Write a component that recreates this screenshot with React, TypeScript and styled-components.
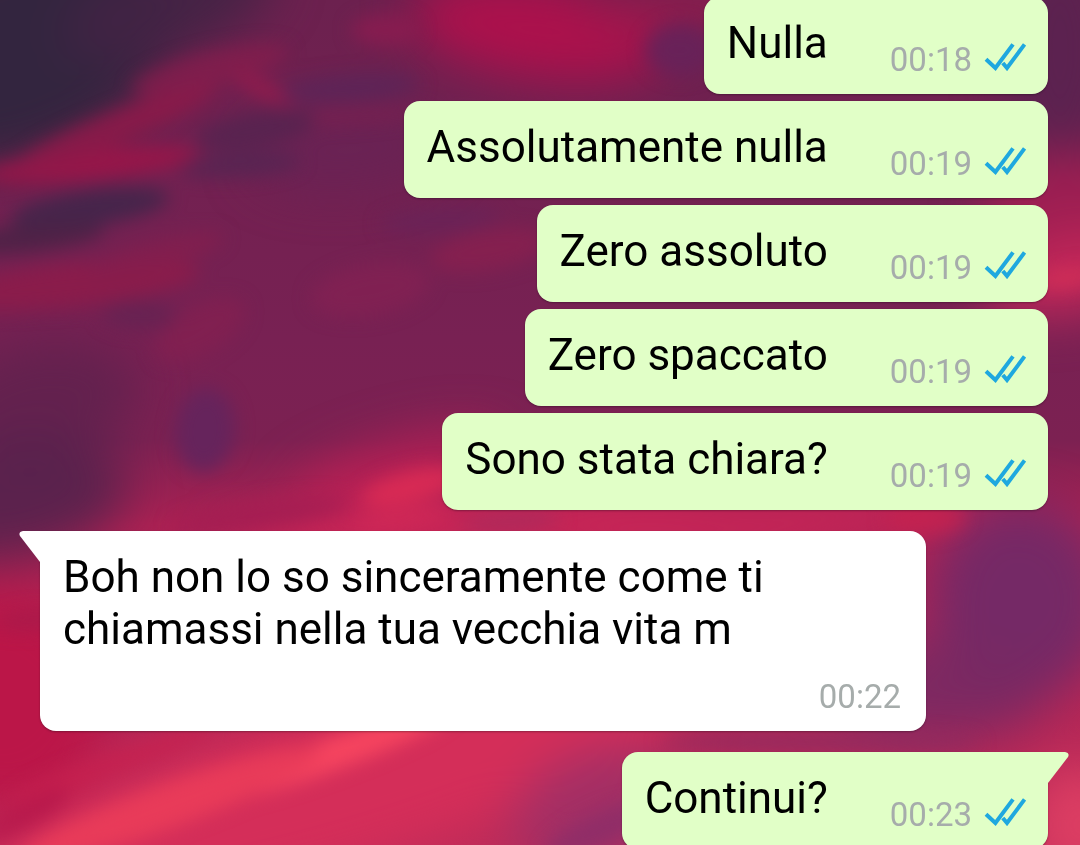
import React from "react";
import styled, { createGlobalStyle } from "styled-components";

const GlobalStyle = createGlobalStyle`
  *, *::before, *::after { box-sizing: border-box; }
  body {
    margin: 0;
    background: #6e2152;
    font-family: Roboto, "Noto Sans", sans-serif;
  }
`;

const Screen = styled.main`
  display: grid;
  grid-template: minmax(0, 1fr) / minmax(0, 1fr);
  height: 100vh;
  overflow: hidden;
`;

const WallpaperArt = styled.svg`
  grid-area: 1 / 1;
  display: block;
  width: 100%;
  height: 100%;
`;

const Conversation = styled.ol`
  grid-area: 1 / 1;
  z-index: 1;
  display: flex;
  flex-direction: column;
  margin: -3px 0 0;
  padding: 0 32px 0 40px;
  list-style: none;
`;

const MessageRow = styled.li<{ $mine: boolean; $first: boolean }>`
  display: flex;
  flex-shrink: 0;
  justify-content: ${(p) => (p.$mine ? "flex-end" : "flex-start")};
  margin-top: ${(p) => (p.$first ? 21 : 7)}px;

  &:first-child {
    margin-top: 0;
  }
`;

const Bubble = styled.article<{ $mine: boolean; $first: boolean }>`
  position: relative;
  display: flex;
  flex-direction: ${(p) => (p.$mine ? "row" : "column")};
  align-items: ${(p) => (p.$mine ? "flex-end" : "stretch")};
  gap: ${(p) => (p.$mine ? "0 62px" : "22px")};
  max-width: 886px;
  padding: ${(p) => (p.$mine ? "20px 22px 15px 23px" : "20px 25px 15px 23px")};
  border-radius: 16px;
  border-top-left-radius: ${(p) => (!p.$mine && p.$first ? 0 : 16)}px;
  border-top-right-radius: ${(p) => (p.$mine && p.$first ? 0 : 16)}px;
  background: ${(p) => (p.$mine ? "#e1ffc7" : "#ffffff")};
  box-shadow: 0 1px 2px rgba(20, 10, 20, 0.35);
`;

const Tail = styled.svg<{ $mine: boolean }>`
  position: absolute;
  top: 0;
  left: ${(p) => (p.$mine ? "100%" : "auto")};
  right: ${(p) => (p.$mine ? "auto" : "100%")};
  width: 21px;
  height: 32px;
  fill: ${(p) => (p.$mine ? "#e1ffc7" : "#ffffff")};
`;

const Body = styled.p<{ $mine: boolean }>`
  margin: 0;
  padding-bottom: ${(p) => (p.$mine ? 10 : 0)}px;
  color: #000;
  font-size: 44px;
  line-height: 52px;
`;

const Meta = styled.footer`
  display: flex;
  align-items: flex-end;
  justify-content: flex-end;
  gap: 12px;
`;

const Stamp = styled.time`
  color: #a6acab;
  font-size: 33px;
  line-height: 39px;
`;

const ReadTicks = styled.svg`
  width: 42px;
  height: 29px;
  margin-bottom: 8px;
  fill: none;
  stroke: #1fa8df;
  stroke-width: 4;
`;

type Message = { text: string; time: string; mine: boolean; first: boolean };

const messages: Message[] = [
  { text: "Nulla", time: "00:18", mine: true, first: false },
  { text: "Assolutamente nulla", time: "00:19", mine: true, first: false },
  { text: "Zero assoluto", time: "00:19", mine: true, first: false },
  { text: "Zero spaccato", time: "00:19", mine: true, first: false },
  { text: "Sono stata chiara?", time: "00:19", mine: true, first: false },
  {
    text: "Boh non lo so sinceramente come ti chiamassi nella tua vecchia vita m",
    time: "00:22",
    mine: false,
    first: true,
  },
  { text: "Continui?", time: "00:23", mine: true, first: true },
];

type Cloud = [cx: number, cy: number, rx: number, ry: number, tilt: number, fill: string, opacity: number];

const hazeClouds: Cloud[] = [
  [20, 50, 170, 105, -22, "#33253f", 1],
  [170, 5, 110, 50, -20, "#432445", 0.9],
  [1060, 50, 60, 110, 0, "#5a2250", 0.9],
  [540, 30, 130, 50, 8, "#ac114c", 1],
  [700, 10, 120, 25, 0, "#961c4e", 0.8],
  [350, 150, 100, 40, -5, "#682355", 0.8],
  [40, 400, 100, 60, -10, "#5e224e", 0.8],
  [10, 500, 120, 60, -10, "#54224c", 0.9],
  [1070, 210, 90, 60, 0, "#a81e52", 0.8],
  [1070, 275, 90, 40, -10, "#c8285a", 0.9],
  [400, 470, 110, 30, -15, "#b81f54", 0.9],
  [520, 525, 300, 28, -3, "#cc2657", 1],
  [780, 525, 200, 35, -8, "#c42658", 0.9],
  [1020, 600, 90, 100, 0, "#752966", 1],
  [0, 700, 110, 110, 0, "#bb1648", 1],
  [330, 790, 380, 80, -16, "#d42e59", 1],
  [600, 810, 90, 60, -20, "#a03066", 0.9],
  [940, 690, 110, 50, 0, "#782963", 0.9],
  [1080, 825, 50, 60, 0, "#dc3e63", 1],
];

const streakClouds: Cloud[] = [
  [90, 165, 110, 15, -6, "#961649", 1],
  [115, 128, 110, 16, -22, "#8c1a49", 0.9],
  [210, 70, 80, 18, -14, "#841d4c", 0.8],
  [265, 90, 34, 9, 25, "#981a4c", 0.8],
  [385, 30, 34, 16, 0, "#8c1c50", 0.8],
  [90, 208, 80, 18, -8, "#46254b", 1],
  [30, 238, 75, 14, -6, "#4a2246", 0.9],
  [70, 285, 130, 22, -6, "#8a1c4b", 1],
  [155, 255, 70, 14, -15, "#851e4e", 0.8],
  [350, 88, 70, 14, -4, "#5c2558", 0.9],
  [350, 116, 70, 7, -3, "#7c2050", 0.7],
  [255, 130, 60, 18, -10, "#572350", 0.9],
  [240, 165, 60, 12, -4, "#522552", 0.8],
  [680, 50, 34, 26, 0, "#66225a", 0.9],
  [205, 430, 30, 42, 5, "#66245c", 1],
  [140, 315, 38, 14, 0, "#642352", 0.8],
  [200, 330, 50, 24, -30, "#842050", 0.7],
  [370, 290, 60, 26, -10, "#842152", 0.7],
  [490, 250, 60, 20, -10, "#8c1f4e", 0.7],
  [440, 220, 60, 12, -4, "#66245a", 0.7],
  [410, 487, 50, 16, -15, "#dc2b54", 0.9],
  [400, 520, 50, 10, -8, "#d42a57", 0.7],
  [510, 522, 50, 9, -4, "#a82c5c", 0.8],
  [260, 515, 90, 14, -8, "#a31d53", 0.8],
  [925, 518, 40, 16, 0, "#c5224f", 0.8],
  [1066, 278, 30, 10, -8, "#d43058", 0.8],
  [30, 620, 35, 10, -6, "#a51a4a", 0.7],
  [330, 755, 130, 16, -20, "#f5445f", 1],
  [170, 805, 160, 22, -20, "#e83b59", 1],
  [110, 765, 110, 12, -20, "#c8204f", 0.7],
  [25, 815, 50, 12, -30, "#b3164a", 0.7],
  [600, 830, 60, 16, -25, "#8e2e68", 0.9],
  [820, 742, 160, 10, 0, "#8c2c60", 0.8],
];

const drawCloud = ([cx, cy, rx, ry, tilt, fill, opacity]: Cloud) => (
  <ellipse
    key={`${cx}-${cy}`}
    cx={cx}
    cy={cy}
    rx={rx}
    ry={ry}
    fill={fill}
    opacity={opacity}
    transform={`rotate(${tilt} ${cx} ${cy})`}
  />
);

function Wallpaper() {
  return (
    <WallpaperArt viewBox="0 0 1080 845" preserveAspectRatio="xMidYMid slice" aria-hidden="true">
      <defs>
        <linearGradient id="sky" x1="0" y1="0" x2="0" y2="1">
          <stop offset="0" stopColor="#6c214f" />
          <stop offset="0.4" stopColor="#782153" />
          <stop offset="0.52" stopColor="#7c2152" />
          <stop offset="0.62" stopColor="#ab2153" />
          <stop offset="1" stopColor="#bd2b59" />
        </linearGradient>
        <filter id="haze" x="-20%" y="-20%" width="140%" height="140%" colorInterpolationFilters="sRGB">
          <feGaussianBlur stdDeviation="24" />
        </filter>
        <filter id="streak" x="-20%" y="-20%" width="140%" height="140%" colorInterpolationFilters="sRGB">
          <feGaussianBlur stdDeviation="9" />
        </filter>
      </defs>
      <rect width="1080" height="845" fill="url(#sky)" />
      <g filter="url(#haze)">{hazeClouds.map(drawCloud)}</g>
      <g filter="url(#streak)">{streakClouds.map(drawCloud)}</g>
    </WallpaperArt>
  );
}

function MessageItem({ text, time, mine, first }: Message) {
  return (
    <MessageRow $mine={mine} $first={first}>
      <Bubble $mine={mine} $first={first}>
        {first && (
          <Tail $mine={mine} viewBox="0 0 21 32" aria-hidden="true">
            <path
              d={
                mine
                  ? "M0 0H17Q22 1 20 5L0 31Z"
                  : "M21 0H4Q-1 1 1 5L21 31Z"
              }
            />
          </Tail>
        )}
        <Body $mine={mine}>{text}</Body>
        <Meta>
          <Stamp>{time}</Stamp>
          {mine && (
            <ReadTicks viewBox="0 0 42 29" role="img" aria-label="Letto">
              <path d="M2 17.2L11.4 26L29 2.4M18.8 21L23 26L40.6 2.4" />
            </ReadTicks>
          )}
        </Meta>
      </Bubble>
    </MessageRow>
  );
}

export default function App() {
  return (
    <>
      <GlobalStyle />
      <Screen>
        <Wallpaper />
        <Conversation>
          {messages.map((message, index) => (
            <MessageItem key={index} {...message} />
          ))}
        </Conversation>
      </Screen>
    </>
  );
}
